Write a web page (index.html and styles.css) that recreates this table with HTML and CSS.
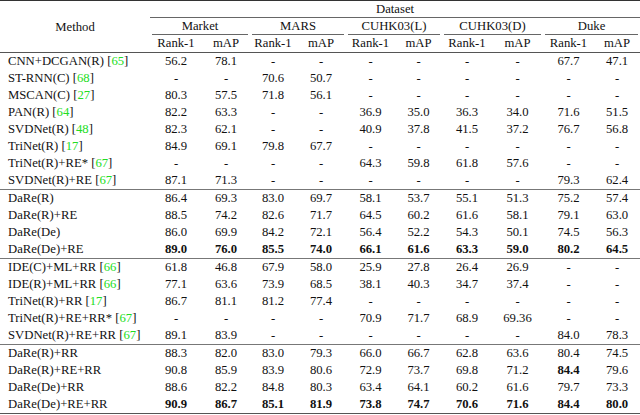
FILE: index.html
```html
<!DOCTYPE html>
<html>
<head>
<meta charset="utf-8">
<link rel="stylesheet" href="styles.css">
</head>
<body>
<table class="results">
<colgroup>
<col class="c-method">
<col class="c1"><col class="c2">
<col class="c3"><col class="c4">
<col class="c5"><col class="c6">
<col class="c7"><col class="c8">
<col class="c9"><col class="c10">
</colgroup>
<thead>
<tr class="h1"><th rowspan="3" class="method"><span class="hd">Method</span></th><th colspan="10" class="dataset"><span class="hd">Dataset</span></th></tr>
<tr class="h2">
<th colspan="2"><div class="rule">Market</div></th>
<th colspan="2"><div class="rule">MARS</div></th>
<th colspan="2"><div class="rule">CUHK03(L)</div></th>
<th colspan="2"><div class="rule">CUHK03(D)</div></th>
<th colspan="2"><div class="rule">Duke</div></th>
</tr>
<tr class="h3">
<th>Rank-1</th><th>mAP</th><th>Rank-1</th><th>mAP</th><th>Rank-1</th><th>mAP</th><th>Rank-1</th><th>mAP</th><th>Rank-1</th><th>mAP</th>
</tr>
</thead>
<tbody>
<tr><td>CNN+DCGAN(R) [<span class="ref">65</span>]</td><td>56.2</td><td>78.1</td><td>-</td><td>-</td><td>-</td><td>-</td><td>-</td><td>-</td><td>67.7</td><td>47.1</td></tr>
<tr><td>ST-RNN(C) [<span class="ref">68</span>]</td><td>-</td><td>-</td><td>70.6</td><td>50.7</td><td>-</td><td>-</td><td>-</td><td>-</td><td>-</td><td>-</td></tr>
<tr><td>MSCAN(C) [<span class="ref">27</span>]</td><td>80.3</td><td>57.5</td><td>71.8</td><td>56.1</td><td>-</td><td>-</td><td>-</td><td>-</td><td>-</td><td>-</td></tr>
<tr><td>PAN(R) [<span class="ref">64</span>]</td><td>82.2</td><td>63.3</td><td>-</td><td>-</td><td>36.9</td><td>35.0</td><td>36.3</td><td>34.0</td><td>71.6</td><td>51.5</td></tr>
<tr><td>SVDNet(R) [<span class="ref">48</span>]</td><td>82.3</td><td>62.1</td><td>-</td><td>-</td><td>40.9</td><td>37.8</td><td>41.5</td><td>37.2</td><td>76.7</td><td>56.8</td></tr>
<tr><td>TriNet(R) [<span class="ref">17</span>]</td><td>84.9</td><td>69.1</td><td>79.8</td><td>67.7</td><td>-</td><td>-</td><td>-</td><td>-</td><td>-</td><td>-</td></tr>
<tr><td>TriNet(R)+RE* [<span class="ref">67</span>]</td><td>-</td><td>-</td><td>-</td><td>-</td><td>64.3</td><td>59.8</td><td>61.8</td><td>57.6</td><td>-</td><td>-</td></tr>
<tr><td>SVDNet(R)+RE [<span class="ref">67</span>]</td><td>87.1</td><td>71.3</td><td>-</td><td>-</td><td>-</td><td>-</td><td>-</td><td>-</td><td>79.3</td><td>62.4</td></tr>
</tbody>
<tbody>
<tr><td>DaRe(R)</td><td>86.4</td><td>69.3</td><td>83.0</td><td>69.7</td><td>58.1</td><td>53.7</td><td>55.1</td><td>51.3</td><td>75.2</td><td>57.4</td></tr>
<tr><td>DaRe(R)+RE</td><td>88.5</td><td>74.2</td><td>82.6</td><td>71.7</td><td>64.5</td><td>60.2</td><td>61.6</td><td>58.1</td><td>79.1</td><td>63.0</td></tr>
<tr><td>DaRe(De)</td><td>86.0</td><td>69.9</td><td>84.2</td><td>72.1</td><td>56.4</td><td>52.2</td><td>54.3</td><td>50.1</td><td>74.5</td><td>56.3</td></tr>
<tr class="best"><td>DaRe(De)+RE</td><td>89.0</td><td>76.0</td><td>85.5</td><td>74.0</td><td>66.1</td><td>61.6</td><td>63.3</td><td>59.0</td><td>80.2</td><td>64.5</td></tr>
</tbody>
<tbody>
<tr><td>IDE(C)+ML+RR [<span class="ref">66</span>]</td><td>61.8</td><td>46.8</td><td>67.9</td><td>58.0</td><td>25.9</td><td>27.8</td><td>26.4</td><td>26.9</td><td>-</td><td>-</td></tr>
<tr><td>IDE(R)+ML+RR [<span class="ref">66</span>]</td><td>77.1</td><td>63.6</td><td>73.9</td><td>68.5</td><td>38.1</td><td>40.3</td><td>34.7</td><td>37.4</td><td>-</td><td>-</td></tr>
<tr><td>TriNet(R)+RR [<span class="ref">17</span>]</td><td>86.7</td><td>81.1</td><td>81.2</td><td>77.4</td><td>-</td><td>-</td><td>-</td><td>-</td><td>-</td><td>-</td></tr>
<tr><td>TriNet(R)+RE+RR* [<span class="ref">67</span>]</td><td>-</td><td>-</td><td>-</td><td>-</td><td>70.9</td><td>71.7</td><td>68.9</td><td>69.36</td><td>-</td><td>-</td></tr>
<tr><td>SVDNet(R)+RE+RR [<span class="ref">67</span>]</td><td>89.1</td><td>83.9</td><td>-</td><td>-</td><td>-</td><td>-</td><td>-</td><td>-</td><td>84.0</td><td>78.3</td></tr>
</tbody>
<tbody>
<tr><td>DaRe(R)+RR</td><td>88.3</td><td>82.0</td><td>83.0</td><td>79.3</td><td>66.0</td><td>66.7</td><td>62.8</td><td>63.6</td><td>80.4</td><td>74.5</td></tr>
<tr><td>DaRe(R)+RE+RR</td><td>90.8</td><td>85.9</td><td>83.9</td><td>80.6</td><td>72.9</td><td>73.7</td><td>69.8</td><td>71.2</td><td class="b">84.4</td><td>79.6</td></tr>
<tr><td>DaRe(De)+RR</td><td>88.6</td><td>82.2</td><td>84.8</td><td>80.3</td><td>63.4</td><td>64.1</td><td>60.2</td><td>61.6</td><td>79.7</td><td>73.3</td></tr>
<tr class="best"><td>DaRe(De)+RE+RR</td><td>90.9</td><td>86.7</td><td>85.1</td><td>81.9</td><td>73.8</td><td>74.7</td><td>70.6</td><td>71.6</td><td>84.4</td><td>80.0</td></tr>
</tbody>
</table>
</body>
</html>
```

FILE: styles.css
```css
html, body {
  margin: 0;
  padding: 0;
  background: #ffffff;
}

body {
  font-family: "Liberation Serif", "Times New Roman", serif;
  font-size: 12.7px;
  color: #111111;
}

.results {
  width: 640px;
  table-layout: fixed;
  border-collapse: separate;
  border-spacing: 0;
  border-top: 1px solid #333333;
  border-bottom: 1px solid #555555;
}

.c-method { width: 150px; }
.c1 { width: 52px; }
.c2 { width: 48px; }
.c3 { width: 46px; }
.c4 { width: 50px; }
.c5 { width: 49px; }
.c6 { width: 47px; }
.c7 { width: 50px; }
.c8 { width: 51px; }
.c9 { width: 51px; }
.c10 { width: 46px; }

.results th,
.results td {
  padding: 0;
  font-weight: 400;
  text-align: center;
  white-space: nowrap;
}

.hd {
  font-weight: 400;
}

.h1 th {
  line-height: 16px;
}

.results .method {
  vertical-align: middle;
  border-bottom: 1px solid #555555;
}

.dataset {
  border-bottom: 1px solid #666666;
}

.h2 th {
  padding: 0 2px;
}

.rule {
  line-height: 16px;
  border-bottom: 1px solid #666666;
}

.h3 th {
  line-height: 17px;
  border-bottom: 1px solid #555555;
}

.results td {
  line-height: 17px;
}

.results td:first-child {
  text-align: left;
  padding-left: 8px;
}

.results tbody + tbody tr:first-child td {
  border-top: 1px solid #777777;
}

.ref {
  color: #22dd22;
}

.results .best td,
.results td.b {
  font-weight: bold;
}

.results .best td:first-child {
  font-weight: 400;
}
```
